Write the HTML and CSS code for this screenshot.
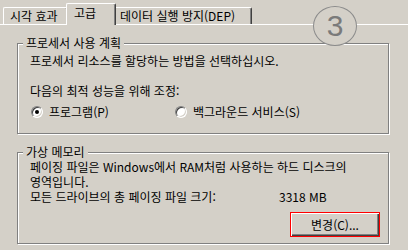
FILE: index.html
```html
<!DOCTYPE html>
<html lang="ko">
	<head>
		<meta charset="UTF-8" />
		<title>성능 옵션 - 고급</title>
		<link rel="stylesheet" href="styles.css">
	</head>
	<body>
		<div class="window">
			<div class="tabs">
				<div class="tab visual">시각 효과</div>
				<div class="tab active">고급</div>
				<div class="tab dep">데이터 실행 방지(DEP)</div>
			</div>
			<div class="panel">
				<fieldset class="group cpu">
					<legend>프로세서 사용 계획</legend>
					<p class="note">프로세서 리소스를 할당하는 방법을 선택하십시오.</p>
					<p class="label">다음의 최적 성능을 위해 조정:</p>
					<div class="options">
						<label class="option first"><span class="radio checked"></span>프로그램(P)</label>
						<label class="option"><span class="radio"></span>백그라운드 서비스(S)</label>
					</div>
				</fieldset>
				<fieldset class="group memory">
					<legend>가상 메모리</legend>
					<p>페이징 파일은 Windows에서 RAM처럼 사용하는 하드 디스크의<br />영역입니다.</p>
					<div class="size-row">
						<span>모든 드라이브의 총 페이징 파일 크기:</span>
						<span>3318 MB</span>
					</div>
					<div class="actions">
						<button type="button" class="btn">변경(C)...</button>
					</div>
				</fieldset>
			</div>
			<div class="step">3</div>
		</div>
	</body>
</html>
```

FILE: styles.css
```css
body {
	margin: 0;
	background: #d4d0c8;
	font-family: 'Noto Sans CJK KR', 'Liberation Sans', sans-serif;
	font-size: 12px;
	color: #000;
}
.window {
	position: relative;
	width: 408px;
	height: 250px;
	overflow: hidden;
}
.tabs {
	display: flex;
	align-items: flex-end;
	height: 24px;
	padding-left: 3px;
}
.tab {
	position: relative;
	box-sizing: border-box;
	height: 17px;
	line-height: 16px;
	border-top: 1px solid #fff;
	border-left: 1px solid #fff;
	border-right: 1px solid #404040;
	border-radius: 2px 2px 0 0;
	box-shadow: inset -1px 0 0 #808080;
	white-space: nowrap;
}
.tab.visual {
	width: 65px;
	padding-left: 6px;
}
.tab.active {
	z-index: 2;
	width: 50px;
	height: 22px;
	line-height: 17px;
	margin: 0 -2px -1px;
	padding-left: 7px;
	background: #d4d0c8;
}
.tab.dep {
	width: 138px;
	padding-left: 5px;
}
.panel {
	border-top: 1px solid #fff;
	padding: 11px 19px 0 17px;
}
.group {
	margin: 0;
	padding: 4px 8px 14px 12px;
	min-width: 0;
	border: 1px solid #808080;
	box-shadow: inset 1px 1px 0 #fff, 1px 1px 0 #fff;
}
.group legend {
	margin-left: -7px;
	padding: 0 3px;
	line-height: 14px;
	background: #d4d0c8;
}
.group p {
	margin: 0;
	line-height: 14px;
}
.cpu .label {
	margin-top: 16px;
}
.options {
	display: flex;
	margin-top: 7px;
	line-height: 14px;
}
.option {
	display: flex;
	align-items: center;
	gap: 6px;
	margin-left: 1px;
}
.option.first {
	width: 143px;
}
.radio {
	position: relative;
	box-sizing: border-box;
	width: 12px;
	height: 12px;
	border-radius: 50%;
	background: #fff;
	border: 1px solid;
	border-color: #808080 #fff #fff #808080;
	box-shadow: inset 1px 1px 0 #404040, inset -1px -1px 0 #d4d0c8;
}
.radio.checked::after {
	content: '';
	position: absolute;
	left: 3px;
	top: 3px;
	width: 4px;
	height: 4px;
	border-radius: 50%;
	background: #000;
}
.memory {
	margin-top: 11px;
	padding: 0 8px 6px 12px;
}
.memory p,
.size-row {
	line-height: 15px;
}
.size-row {
	display: grid;
	grid-template-columns: 249px auto;
}
.actions {
	display: flex;
	justify-content: flex-end;
	margin-top: 8px;
}
.btn {
	width: 90px;
	height: 25px;
	padding: 0;
	font: inherit;
	color: #000;
	background: #d4d0c8;
	border: 1px solid #ff0000;
	border-radius: 0;
	box-shadow: inset 1px 1px 0 #fff, inset -1px -1px 0 #404040, inset -2px -2px 0 #808080;
}
.step {
	position: absolute;
	left: 313px;
	top: 6px;
	width: 42px;
	height: 38px;
	border: 1px solid #8c8c8c;
	border-radius: 50%;
	background: #d4d0c8;
	color: #7a7a7a;
	font-family: 'Liberation Sans', sans-serif;
	font-size: 30px;
	line-height: 38px;
	text-align: center;
}
```
